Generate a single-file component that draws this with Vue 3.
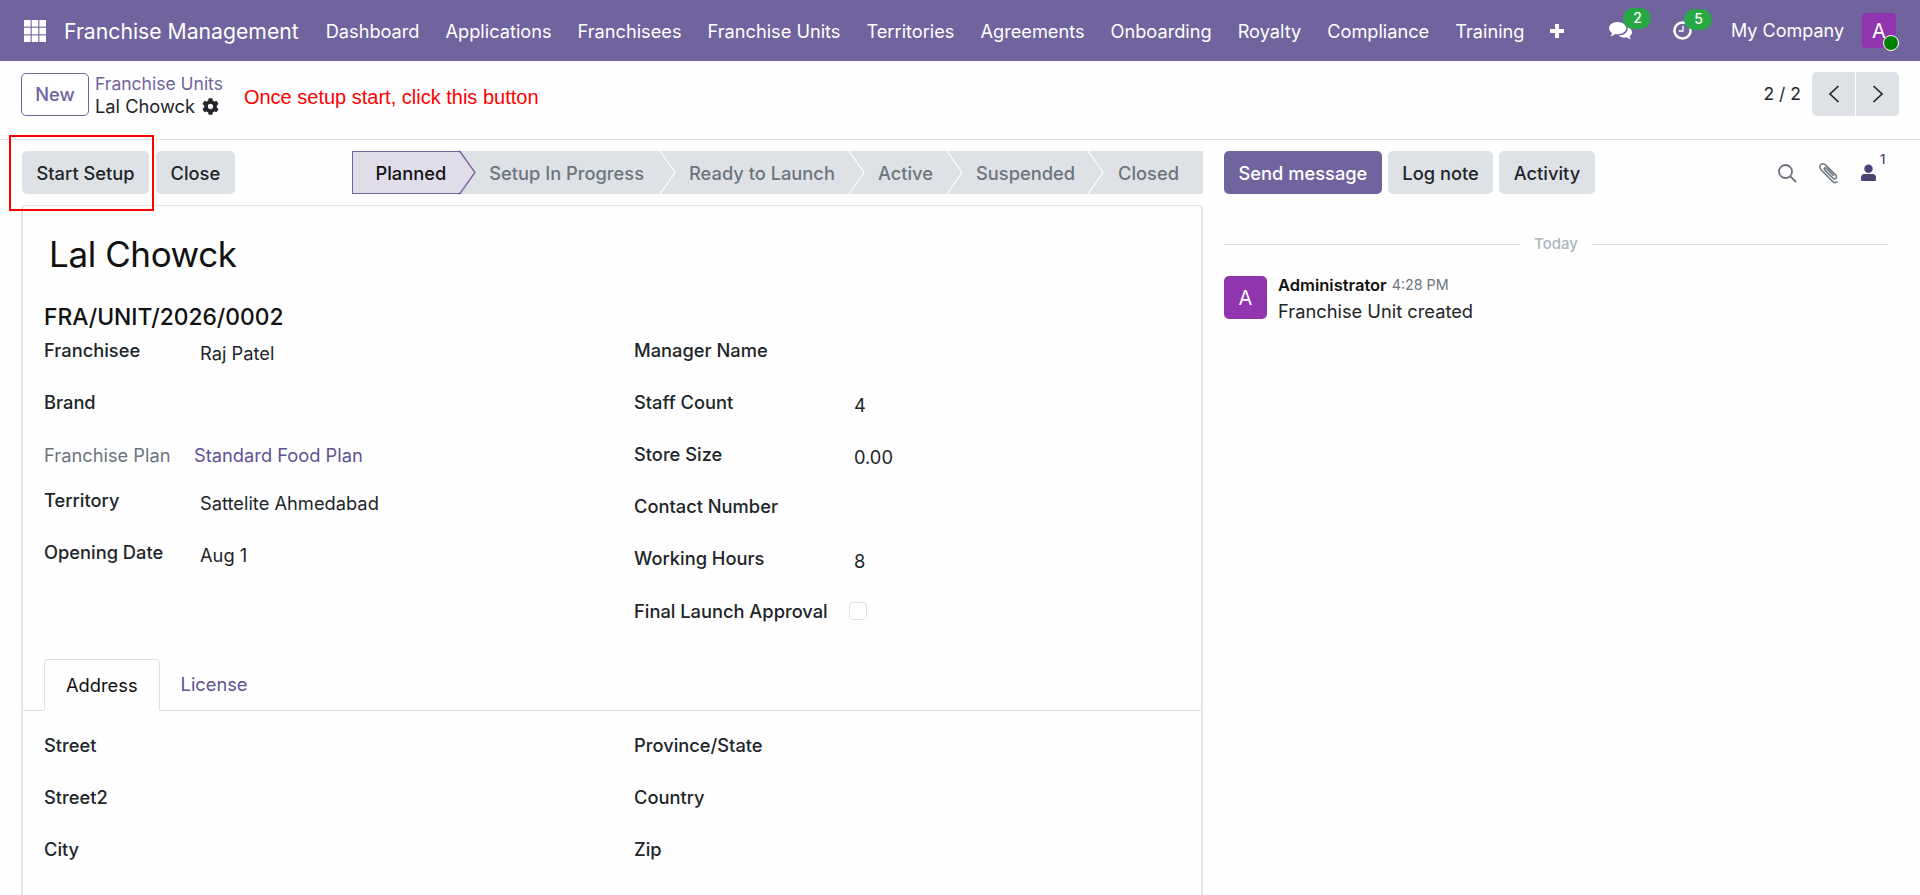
<script setup>
const menus = ['Dashboard','Applications','Franchisees','Franchise Units','Territories','Agreements','Onboarding','Royalty','Compliance','Training']
const steps = ['Setup In Progress','Ready to Launch','Active','Suspended','Closed']
const rightRows = [
  { label: 'Manager Name', value: '' },
  { label: 'Staff Count', value: '4' },
  { label: 'Store Size', value: '0.00' },
  { label: 'Contact Number', value: '' },
  { label: 'Working Hours', value: '8' },
]
</script>

<template>
  <div class="page">
    <header class="nav">
      <svg class="apps" viewBox="0 0 22 22" width="22" height="22">
        <g fill="#fff">
          <rect x="0" y="0" width="6.600" height="6.600" /><rect x="7.700" y="0" width="6.600" height="6.600" /><rect x="15.400" y="0" width="6.600" height="6.600" />
          <rect x="0" y="7.700" width="6.600" height="6.600" /><rect x="7.700" y="7.700" width="6.600" height="6.600" /><rect x="15.400" y="7.700" width="6.600" height="6.600" />
          <rect x="0" y="15.400" width="6.600" height="6.600" /><rect x="7.700" y="15.400" width="6.600" height="6.600" /><rect x="15.400" y="15.400" width="6.600" height="6.600" />
        </g>
      </svg>
      <span class="brand">Franchise Management</span>
      <nav class="menu">
        <span v-for="m in menus" :key="m" class="menu-item">{{ m }}</span>
        <svg class="plus" viewBox="0 0 16 16" width="16" height="16"><path d="M6 1h4v5h5v4h-5v5H6v-5H1V6h5z" fill="#fff" /></svg>
      </nav>
      <div class="systray">
        <span class="tray tray-chat">
          <svg viewBox="0 0 26 24" width="25" height="23">
            <path d="M10 3c5 0 9 2.900 9 6.500S15 16 10 16c-.9 0-1.800-.1-2.600-.3C6 17 4.500 17.700 2.500 18c.9-1 1.500-2.100 1.700-3.400C2.200 13.400 1 11.600 1 9.500 1 5.900 5 3 10 3z" fill="#fff" />
            <path d="M20.500 8.500c2.700 1 4.500 3 4.500 5.300 0 1.700-1 3.200-2.600 4.300.2 1 .8 2 1.600 2.900-1.800-.2-3.200-.9-4.400-1.900-.8.200-1.600.3-2.400.3-2.500 0-4.700-.9-6-2.300 5.600 0 9.800-3.300 9.300-8.600z" fill="#fff" />
          </svg>
          <b class="badge">2</b>
        </span>
        <span class="tray tray-clock">
          <svg viewBox="0 0 22 22" width="21" height="21" fill="none" stroke="#fff">
            <circle cx="11" cy="11" r="8.500" stroke-width="2.600" />
            <path d="M11.500 6v5.500H7" stroke-width="1.400" />
          </svg>
          <b class="badge">5</b>
        </span>
        <span class="company">My Company</span>
        <span class="avatar-wrap">
          <span class="avatar">A</span>
          <i class="online"></i>
        </span>
      </div>
    </header>

    <section class="panel">
      <button class="btn-new">New</button>
      <div class="crumbs">
        <a class="crumb-link">Franchise Units</a>
        <div class="crumb-cur">
          <span>Lal Chowck</span>
          <svg viewBox="0 0 512 512" width="17" height="17"><path fill="#212529" d="M487.4 315.7l-42.6-24.6c4.3-23.2 4.3-47 0-70.2l42.6-24.6c4.9-2.8 7.1-8.6 5.5-14-11.1-35.6-30-67.8-54.7-94.6-3.8-4.1-10-5.1-14.8-2.3L380.8 110c-17.9-15.4-38.5-27.3-60.8-35.1V25.8c0-5.6-3.9-10.5-9.4-11.7-36.7-8.2-74.3-7.8-109.2 0-5.5 1.2-9.4 6.1-9.4 11.7V75c-22.2 7.9-42.8 19.8-60.8 35.1L88.7 85.500c-4.900-2.800-11-1.900-14.800 2.300-24.700 26.700-43.600 58.900-54.700 94.600-1.700 5.400.6 11.200 5.500 14L67.300 221c-4.300 23.200-4.300 47 0 70.200l-42.600 24.600c-4.900 2.800-7.100 8.600-5.500 14 11.100 35.600 30 67.800 54.700 94.600 3.800 4.100 10 5.100 14.800 2.300l42.600-24.600c17.900 15.400 38.500 27.300 60.800 35.100v49.200c0 5.600 3.900 10.500 9.400 11.700 36.700 8.200 74.300 7.800 109.200 0 5.500-1.200 9.400-6.100 9.400-11.700v-49.200c22.200-7.900 42.800-19.800 60.800-35.100l42.600 24.600c4.900 2.800 11 1.900 14.800-2.300 24.700-26.700 43.600-58.900 54.700-94.600 1.500-5.500-.7-11.300-5.600-14.100zM256 336c-44.100 0-80-35.900-80-80s35.900-80 80-80 80 35.900 80 80-35.900 80-80 80z" /></svg>
        </div>
      </div>
      <span class="note">Once setup start, click this button</span>
      <div class="pager">
        <span class="pager-text">2 / 2</span>
        <div class="pager-btns">
          <button class="pager-btn"><svg viewBox="0 0 12 18" width="12" height="18" fill="none" stroke="#212529" stroke-width="1.700"><path d="M10.500 1 2 9l8.500 8" /></svg></button>
          <button class="pager-btn"><svg viewBox="0 0 12 18" width="12" height="18" fill="none" stroke="#212529" stroke-width="1.700"><path d="M1.500 1 10 9l-8.500 8" /></svg></button>
        </div>
      </div>
    </section>

    <main class="main">
      <div class="left">
        <div class="actions">
          <div class="action-btns">
            <button class="btn">Start Setup</button>
            <button class="btn">Close</button>
            <i class="highlight"></i>
          </div>
          <div class="status">
            <span class="step step-on">
              Planned
              <svg class="tip" viewBox="0 0 17 43" width="17" height="43" preserveAspectRatio="none">
                <path d="M-1 0H1L16 21.500 1 43H-1z" fill="#e0dcea" />
                <path d="M-1 .5H1L16 21.500 1 42.500H-1" fill="none" stroke="#71639e" stroke-width="1.300" />
              </svg>
            </span>
            <span v-for="s in steps" :key="s" class="step">
              {{ s }}
              <svg v-if="s !== 'Closed'" class="chev" viewBox="0 0 17 43" width="17" height="43"><path d="M1 0l15 21.500L1 43" fill="none" stroke="#fff" stroke-width="1.200" /></svg>
            </span>
          </div>
        </div>

        <div class="card">
          <h1 class="title">Lal Chowck</h1>
          <h2 class="ref">FRA/UNIT/2026/0002</h2>
          <div class="cols">
            <div>
              <div class="row"><span class="lbl">Franchisee</span><span class="val">Raj Patel</span></div>
              <div class="row"><span class="lbl">Brand</span></div>
              <div class="row row-plan"><span class="plan-lbl">Franchise Plan</span><a class="plan-val">Standard Food Plan</a></div>
              <div class="row"><span class="lbl">Territory</span><span class="val">Sattelite Ahmedabad</span></div>
              <div class="row"><span class="lbl">Opening Date</span><span class="val">Aug 1</span></div>
            </div>
            <div>
              <div v-for="r in rightRows" :key="r.label" class="row">
                <span class="lbl lbl-wide">{{ r.label }}</span><span v-if="r.value" class="val">{{ r.value }}</span>
              </div>
              <div class="row">
                <span class="lbl lbl-check">Final Launch Approval</span><i class="check"></i>
              </div>
            </div>
          </div>

          <div class="tabs">
            <span class="tab tab-on">Address</span>
            <a class="tab tab-link">License</a>
          </div>

          <div class="cols cols-addr">
            <div>
              <div class="row"><span class="lbl">Street</span></div>
              <div class="row"><span class="lbl">Street2</span></div>
              <div class="row"><span class="lbl">City</span></div>
            </div>
            <div>
              <div class="row"><span class="lbl">Province/State</span></div>
              <div class="row"><span class="lbl">Country</span></div>
              <div class="row"><span class="lbl">Zip</span></div>
            </div>
          </div>
        </div>
      </div>

      <aside class="chatter">
        <div class="chat-top">
          <button class="btn btn-primary">Send message</button>
          <button class="btn">Log note</button>
          <button class="btn">Activity</button>
          <div class="chat-icons">
            <svg viewBox="0 0 20 20" width="20" height="20" fill="none" stroke="#6c757d" stroke-width="1.800"><circle cx="8.500" cy="8.500" r="6.500" /><path d="m13.500 13.500 5.500 5.500" /></svg>
            <svg viewBox="0 0 22 24" width="22" height="24" fill="none" stroke="#6c757d" stroke-width="1.500"><path d="M19.500 20.500c-1.600 1.600-3.600 1.300-5.100-.2L3 8.800C1.500 7.300 1.300 5.200 2.700 3.800c1.400-1.400 3.500-1.200 5 .3l10 10c1 1 1.200 2.300.3 3.200-.9.900-2.200.7-3.200-.3L6.700 8.900c-.6-.6-.7-1.300-.2-1.800s1.200-.4 1.800.2l7.400 7.400" /></svg>
            <span class="followers">
              <svg viewBox="0 0 16 18" width="15" height="17" fill="#4e4274"><circle cx="8" cy="5" r="4.500" /><path d="M1 18c-.6 0-1-.4-1-1v-3c0-2 1.500-3.500 3.500-3.500h9c2 0 3.500 1.500 3.500 3.500v3c0 .6-.4 1-1 1z" /></svg>
              <sup class="count">1</sup>
            </span>
          </div>
        </div>
        <div class="sep"><i></i><span>Today</span><i></i></div>
        <div class="msg">
          <span class="msg-avatar">A</span>
          <div>
            <div class="msg-head"><b>Administrator</b><small>4:28 PM</small></div>
            <div class="msg-body">Franchise Unit created</div>
          </div>
        </div>
      </aside>
    </main>
  </div>
</template>

<style>
html, body { margin: 0; height: 100%; overflow: hidden; background: #fff; }
</style>

<style scoped>
.page { height: 895px; overflow: hidden; background: #fefefe; color: #212529; font-family: Inter, "Noto Sans", sans-serif; font-size: 18.3px; line-height: 24px; }
button { font: inherit; border: 0; padding: 0; color: inherit; }

.nav { height: 61px; background: #71639e; color: #fff; display: flex; align-items: center; box-sizing: border-box; padding: 0 24px; }
.apps { flex: none; margin-right: 18px; }
.brand { font-size: 21.2px; margin-right: 14px; white-space: nowrap; }
.menu { display: flex; align-items: center; font-size: 18.2px; }
.menu-item { padding: 0 13px; white-space: nowrap; }
.plus { margin-left: 12px; }
.systray { margin-left: auto; display: flex; align-items: center; }
.tray { position: relative; display: block; }
.tray svg { display: block; }
.tray-chat { margin-right: 39px; }
.tray-clock { margin-right: 37.5px; }
.badge { position: absolute; top: -11px; left: 15px; width: 28px; height: 21px; border-radius: 11px; background: #28a745; color: #fff; font-size: 14px; font-weight: 500; line-height: 20px; text-align: center; }
.tray-clock .badge { left: 12px; }
.company { margin-right: 18px; font-size: 18px; white-space: nowrap; }
.avatar-wrap { position: relative; display: block; width: 34px; height: 35px; }
.avatar { display: flex; width: 34px; height: 35px; align-items: center; justify-content: center; background: #9035ae; border-radius: 4px; font-size: 20px; }
.online { position: absolute; right: -3px; bottom: -3px; box-sizing: border-box; width: 16px; height: 16px; border-radius: 50%; background: #008000; border: 1.500px solid #fff; }

.panel { height: 79px; box-sizing: border-box; border-bottom: 1px solid #dee2e6; display: flex; align-items: center; padding: 0 21px 12px; }
.btn-new { width: 68px; height: 43px; box-sizing: border-box; border: 1px solid #71639e; border-radius: 5px; background: #fff; color: #71639e; font-weight: 450; }
.crumbs { margin: 2px 0 0 6px; }
.crumb-link { display: block; color: #71639e; font-size: 17.5px; line-height: 23px; }
.crumb-cur { display: flex; align-items: center; gap: 7px; line-height: 23px; }
.note { margin: 6px 0 0 21px; color: #f00; font-family: "Liberation Sans", Arial, sans-serif; font-size: 20px; }
.pager { margin-left: auto; display: flex; align-items: center; }
.pager-text { margin-right: 11px; font-size: 17.5px; }
.pager-btns { display: flex; gap: 1px; }
.pager-btn { width: 43px; height: 44px; background: #dee2e6; display: flex; align-items: center; justify-content: center; }
.pager-btn:first-child { border-radius: 5px 0 0 5px; }
.pager-btn:last-child { border-radius: 0 5px 5px 0; }

.main { display: grid; grid-template-columns: 1203px 1fr; }
.left { padding-left: 22px; }
.actions { display: flex; justify-content: space-between; padding-top: 11px; }
.action-btns { position: relative; display: flex; gap: 7px; }
.btn { height: 43px; padding: 0 14.500px; border-radius: 5px; background: #dee2e6; font-weight: 450; white-space: nowrap; }
.highlight { position: absolute; left: -13px; top: -16px; width: 145px; height: 76px; box-sizing: border-box; border: 2.500px solid #f00; pointer-events: none; }
.status { display: flex; height: 43px; background: #dee2e6; color: #6c757d; font-weight: 450; white-space: nowrap; }
.step { position: relative; display: flex; align-items: center; padding: 0 12px 0 30px; }
.step:nth-child(2) { padding-right: 15px; }
.step:nth-child(3), .step:nth-child(4) { padding-right: 13px; }
.step:nth-child(6) { padding-left: 31px; padding-right: 24px; }
.step-on { padding: 0 13px 0 23px; background: #e0dcea; color: #111; box-shadow: inset 1px 0 #71639e, inset 0 1px #71639e, inset 0 -1px #71639e; }
.tip { position: absolute; left: 100%; top: 0; z-index: 1; overflow: visible; }
.chev { position: absolute; left: 100%; top: 0; }

.card { margin: 11px 0 0 -1px; box-sizing: border-box; min-height: 700px; background: #fefefe; border: 1px solid #e3e5ea; border-right-width: 2px; border-left-width: 2px; border-radius: 4px 4px 0 0; padding-top: 26px; }
.title { margin: 0 0 0 26px; font-size: 35px; line-height: 44px; font-weight: 400; letter-spacing: -.4px; color: #111; }
.ref { margin: 32px 0 0 21px; font-size: 22.8px; line-height: 17px; font-weight: 500; color: #111; }
.cols { display: grid; grid-template-columns: 590px 1fr; padding-left: 21px; }
.row { display: flex; align-items: center; height: 52px; }
.row-plan { height: 46px; padding-top: 6px; box-sizing: border-box; }
.lbl { width: 156px; flex: none; font-weight: 450; margin-top: -2px; }
.lbl-wide { width: 220px; }
.lbl-check { width: auto; margin-top: 0; }
.val { margin-top: 4px; }
.plan-lbl { width: 150px; flex: none; color: #6c757d; }
.plan-val { color: #5f5196; }
.check { box-sizing: border-box; width: 18px; height: 18px; margin-left: 21px; border: 1px solid #dee2e6; border-radius: 4px; background: #fff; }

.tabs { display: flex; align-items: flex-end; height: 51px; margin-top: 22px; padding-left: 21px; border-bottom: 1px solid #dee2e6; }
.tab { display: flex; align-items: center; height: 52px; box-sizing: border-box; padding: 0 21px; }
.tab-on { margin-bottom: -1px; border: 1px solid #dee2e6; border-bottom-color: #fefefe; border-radius: 4px 4px 0 0; background: #fefefe; color: #111; }
.tab-link { color: #5f5196; }
.cols-addr { margin-top: 9px; }

.chatter { padding: 11px 32px 0 21px; }
.chat-top { display: flex; gap: 6px; align-items: center; }
.btn-primary { background: #71639e; color: #fff; }
.chat-icons { margin-left: auto; display: flex; align-items: center; gap: 21px; color: #4e4274; }
.chat-icons svg { display: block; }
.followers { position: relative; display: block; margin-right: 12px; }
.count { position: absolute; left: 19px; top: -13px; font-size: 13px; font-weight: 500; line-height: 16px; }
.sep { display: flex; align-items: center; gap: 14px; margin-top: 38px; height: 24px; color: #adb5bd; font-size: 15px; font-weight: 500; }
.sep i { flex: 1; height: 1px; background: #dee2e6; }
.msg { display: flex; gap: 11px; margin-top: 20px; }
.msg-avatar { display: flex; flex: none; width: 43px; height: 43px; align-items: center; justify-content: center; border-radius: 5px; background: #9035ae; color: #fff; font-size: 20px; }
.msg-head { display: flex; align-items: center; gap: 5px; height: 18px; }
.msg-head b { font-size: 16.5px; font-weight: 600; color: #111; }
.msg-head small { font-size: 14.3px; color: #6c757d; }
.msg-body { margin-top: 5px; }
</style>
